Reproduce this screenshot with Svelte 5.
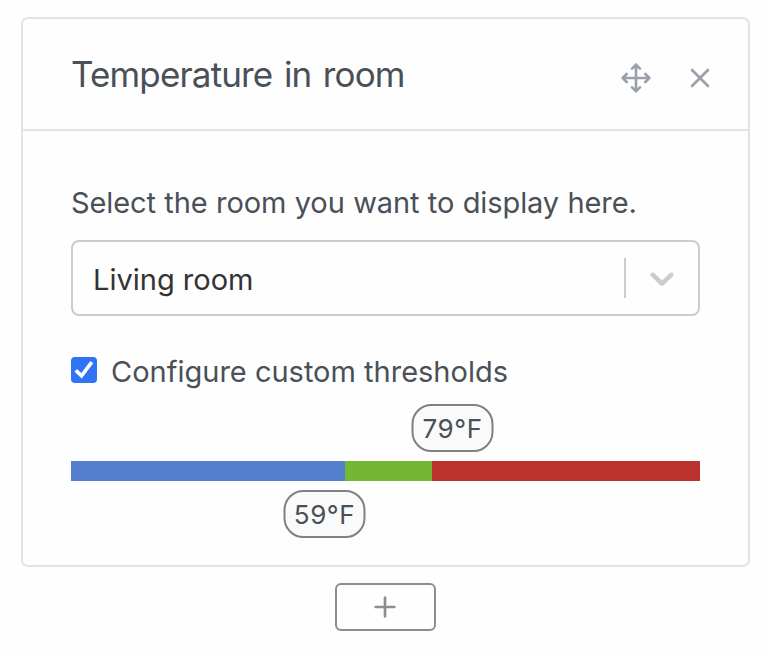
<script>
  let checked = $state(true);
  const segments = [
    { width: 274, color: '#527ecb' },
    { width: 87, color: '#75b735' },
    { width: 268, color: '#bc322c' }
  ];
</script>

<main>
  <section class="card">
    <header>
      <h3>Temperature in room</h3>
      <div class="actions">
        <svg class="icon" viewBox="0 0 24 24"><path d="M5 9l-3 3 3 3M9 5l3-3 3 3M15 19l-3 3-3-3M19 9l3 3-3 3M2 12h20M12 2v20" /></svg>
        <svg class="icon" viewBox="0 0 24 24"><path d="M18 6L6 18M6 6l12 12" /></svg>
      </div>
    </header>
    <div class="body">
      <p class="label">Select the room you want to display here.</p>
      <div class="select">
        <span class="value">Living room</span>
        <span class="separator"></span>
        <svg class="chevron" viewBox="0 0 20 20"><path d="M4.516 7.548c0.436-0.446 1.043-0.481 1.576 0l3.908 3.747 3.908-3.747c0.533-0.481 1.141-0.446 1.574 0 0.436 0.445 0.408 1.197 0 1.615-0.406 0.418-4.695 4.502-4.695 4.502-0.217 0.223-0.502 0.335-0.787 0.335s-0.57-0.112-0.789-0.335c0 0-4.287-4.084-4.695-4.502s-0.436-1.17 0-1.615z" /></svg>
      </div>
      <label class="check">
        <input type="checkbox" bind:checked />
        <span class="box">
          {#if checked}
            <svg viewBox="0 0 26 26"><path d="M4.8 13.4L10.5 18.8L20.8 5.2" /></svg>
          {/if}
        </span>
        <span class="text">Configure custom thresholds</span>
      </label>
      <div class="slider">
        {#each segments as s}
          <div style:width="{s.width}px" style:background={s.color}></div>
        {/each}
        <span class="tag upper">79°F</span>
        <span class="tag lower">59°F</span>
      </div>
    </div>
  </section>
  <button aria-label="Add">
    <svg class="icon" viewBox="0 0 24 24"><path d="M12 5v14M5 12h14" /></svg>
  </button>
</main>

<style>
  :global(body) { background: #fefefe; }
  main {
    box-sizing: border-box;
    width: 770px;
    height: 652px;
    padding: 17px 20px 0 21px;
    display: flex;
    flex-direction: column;
    align-items: center;
    font-family: Inter, "Liberation Sans", sans-serif;
    color: #495057;
  }
  .card {
    box-sizing: border-box;
    width: 729px;
    height: 550px;
    border: 2px solid #dfe4eb;
    border-radius: 7px;
  }
  header {
    box-sizing: border-box;
    height: 112px;
    padding: 0 32px 0 48px;
    border-bottom: 2px solid #dfe4eb;
    display: flex;
    align-items: center;
    justify-content: space-between;
  }
  h3 {
    margin: 0 0 1px;
    font-size: 35px;
    line-height: 40px;
    font-weight: 400;
    letter-spacing: -0.85px;
    word-spacing: 2.5px;
    white-space: nowrap;
  }
  .actions { display: flex; gap: 32px; padding-top: 7px; }
  .icon {
    display: block;
    width: 32px;
    height: 32px;
    fill: none;
    stroke: #9aa0ac;
    stroke-width: 2;
    stroke-linecap: round;
    stroke-linejoin: round;
  }
  .body { padding: 52px 48px 0; }
  .label {
    margin: 0 0 17px;
    font-size: 29px;
    line-height: 40px;
    letter-spacing: -0.1px;
    word-spacing: 0.4px;
    white-space: nowrap;
  }
  .select {
    box-sizing: border-box;
    width: 629px;
    height: 76px;
    border: 2px solid #ccc;
    border-radius: 8px;
    display: flex;
    align-items: center;
    padding: 0 16px 0 20px;
  }
  .value { flex: 1; font-size: 29px; line-height: 40px; color: #333; padding-top: 3px; }
  .separator { width: 2px; height: 40px; background: #ccc; margin-right: 16px; }
  .chevron { width: 40px; height: 40px; fill: #ccc; }
  .check { display: flex; align-items: center; height: 40px; margin-top: 35px; }
  .check input { position: absolute; opacity: 0; }
  .box { width: 26px; height: 26px; border-radius: 4px; background: #3074f6; margin-right: 14px; margin-top: -2px; }
  .box svg { display: block; width: 26px; height: 26px; fill: none; stroke: #fff; stroke-width: 3.6; }
  .text { font-size: 29px; line-height: 40px; padding-top: 2px; white-space: nowrap; }
  .slider { position: relative; display: flex; width: 629px; height: 20px; margin-top: 70px; }
  .tag {
    position: absolute;
    box-sizing: border-box;
    width: 82px;
    height: 48px;
    border: 2px solid #808080;
    border-radius: 20px;
    background: #fafafa;
    padding-top: 1px;
    text-align: center;
    font-size: 26px;
    line-height: 44px;
    letter-spacing: 0.6px;
    white-space: nowrap;
    transform: translateX(0.5px);
  }
  .upper { left: 340px; top: -57px; }
  .lower { left: 212px; top: 29px; }
  button {
    box-sizing: border-box;
    width: 101px;
    height: 48px;
    margin-top: 16px;
    padding: 0;
    border: 2px solid #868e96;
    border-radius: 6px;
    background: transparent;
    display: flex;
    align-items: center;
    justify-content: center;
  }
  button .icon { stroke: #868e96; margin-left: -1px; }
</style>
